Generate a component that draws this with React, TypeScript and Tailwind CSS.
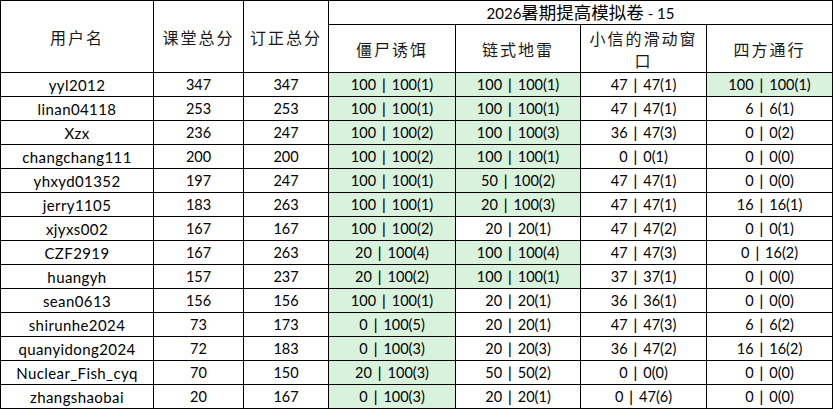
import React from "react";

type Cell = [string, boolean];
type Row = { name: string; a: string; b: string; cells: Cell[] };

const rows: Row[] = [
  { name: "yyl2012", a: "347", b: "347", cells: [["100 | 100(1)", true], ["100 | 100(1)", true], ["47 | 47(1)", false], ["100 | 100(1)", true]] },
  { name: "linan04118", a: "253", b: "253", cells: [["100 | 100(1)", true], ["100 | 100(1)", true], ["47 | 47(1)", false], ["6 | 6(1)", false]] },
  { name: "Xzx", a: "236", b: "247", cells: [["100 | 100(2)", true], ["100 | 100(3)", true], ["36 | 47(3)", false], ["0 | 0(2)", false]] },
  { name: "changchang111", a: "200", b: "200", cells: [["100 | 100(2)", true], ["100 | 100(1)", true], ["0 | 0(1)", false], ["0 | 0(0)", false]] },
  { name: "yhxyd01352", a: "197", b: "247", cells: [["100 | 100(1)", true], ["50 | 100(2)", true], ["47 | 47(1)", false], ["0 | 0(0)", false]] },
  { name: "jerry1105", a: "183", b: "263", cells: [["100 | 100(1)", true], ["20 | 100(3)", true], ["47 | 47(1)", false], ["16 | 16(1)", false]] },
  { name: "xjyxs002", a: "167", b: "167", cells: [["100 | 100(2)", true], ["20 | 20(1)", false], ["47 | 47(2)", false], ["0 | 0(1)", false]] },
  { name: "CZF2919", a: "167", b: "263", cells: [["20 | 100(4)", true], ["100 | 100(4)", true], ["47 | 47(3)", false], ["0 | 16(2)", false]] },
  { name: "huangyh", a: "157", b: "237", cells: [["20 | 100(2)", true], ["100 | 100(1)", true], ["37 | 37(1)", false], ["0 | 0(0)", false]] },
  { name: "sean0613", a: "156", b: "156", cells: [["100 | 100(1)", true], ["20 | 20(1)", false], ["36 | 36(1)", false], ["0 | 0(0)", false]] },
  { name: "shirunhe2024", a: "73", b: "173", cells: [["0 | 100(5)", true], ["20 | 20(1)", false], ["47 | 47(3)", false], ["6 | 6(2)", false]] },
  { name: "quanyidong2024", a: "72", b: "183", cells: [["0 | 100(3)", true], ["20 | 20(3)", false], ["36 | 47(2)", false], ["16 | 16(2)", false]] },
  { name: "Nuclear_Fish_cyq", a: "70", b: "150", cells: [["20 | 100(3)", true], ["50 | 50(2)", false], ["0 | 0(0)", false], ["0 | 0(0)", false]] },
  { name: "zhangshaobai", a: "20", b: "167", cells: [["0 | 100(3)", true], ["20 | 20(1)", false], ["0 | 47(6)", false], ["0 | 0(0)", false]] },
];

const latin = { fontFamily: "Lato, 'Noto Sans CJK SC', sans-serif" };
const cjk = { fontFamily: "'Noto Sans CJK SC', sans-serif" };

function Score({ text }: { text: string }) {
  const [l, r] = text.split(" | ");
  return (
    <>
      {l}
      <span className="mx-[6px] font-semibold">|</span>
      {r}
    </>
  );
}

export default function App() {
  const th = "border border-black text-center align-middle font-normal text-[16px] tracking-[2px] text-[#1a1a1a] p-0 leading-[20px]";
  const td = "border border-black text-center align-middle p-0 h-[24px] text-[14.5px] text-black leading-[22px] whitespace-nowrap";
  return (
    <div className="bg-white w-[833px] h-[410px] overflow-hidden">
      <table className="border-collapse table-fixed w-[832px]" style={latin}>
        <colgroup>
          <col className="w-[153px]" />
          <col className="w-[90px]" />
          <col className="w-[85px]" />
          <col className="w-[127px]" />
          <col className="w-[125px]" />
          <col className="w-[126px]" />
          <col className="w-[126px]" />
        </colgroup>
        <thead>
          <tr className="h-[24px]">
            <th rowSpan={2} className={th + " tracking-[2.5px]"} style={cjk}>用户名</th>
            <th rowSpan={2} className={th + " tracking-[1px]"} style={cjk}>课堂总分</th>
            <th rowSpan={2} className={th + " tracking-[1px]"} style={cjk}>订正总分</th>
            <th colSpan={4} className="border border-black text-center align-middle font-normal text-[15px] text-black p-0 h-[24px] leading-[22px]" style={latin}>
              2026<span className="text-[17.5px]" style={cjk}>暑期提高模拟卷</span> - 15
            </th>
          </tr>
          <tr className="h-[48px]">
            <th className={th} style={cjk}>僵尸诱饵</th>
            <th className={th} style={cjk}>链式地雷</th>
            <th className={th + " leading-[22px]"} style={cjk}>
              <div className="leading-[22px]">小信的滑动窗</div>
              <div className="leading-[22px]">口</div>
            </th>
            <th className={th} style={cjk}>四方通行</th>
          </tr>
        </thead>
        <tbody>
          {rows.map((r) => (
            <tr key={r.name} className="h-[24px]">
              <td className={td + " text-[15px] tracking-[0.4px]"}>{r.name}</td>
              <td className={td}>{r.a}</td>
              <td className={td}>{r.b}</td>
              {r.cells.map(([t, g], i) => (
                <td key={i} className={td + (g ? " bg-[#d9f2db]" : "")}>
                  <Score text={t} />
                </td>
              ))}
            </tr>
          ))}
        </tbody>
      </table>
    </div>
  );
}
